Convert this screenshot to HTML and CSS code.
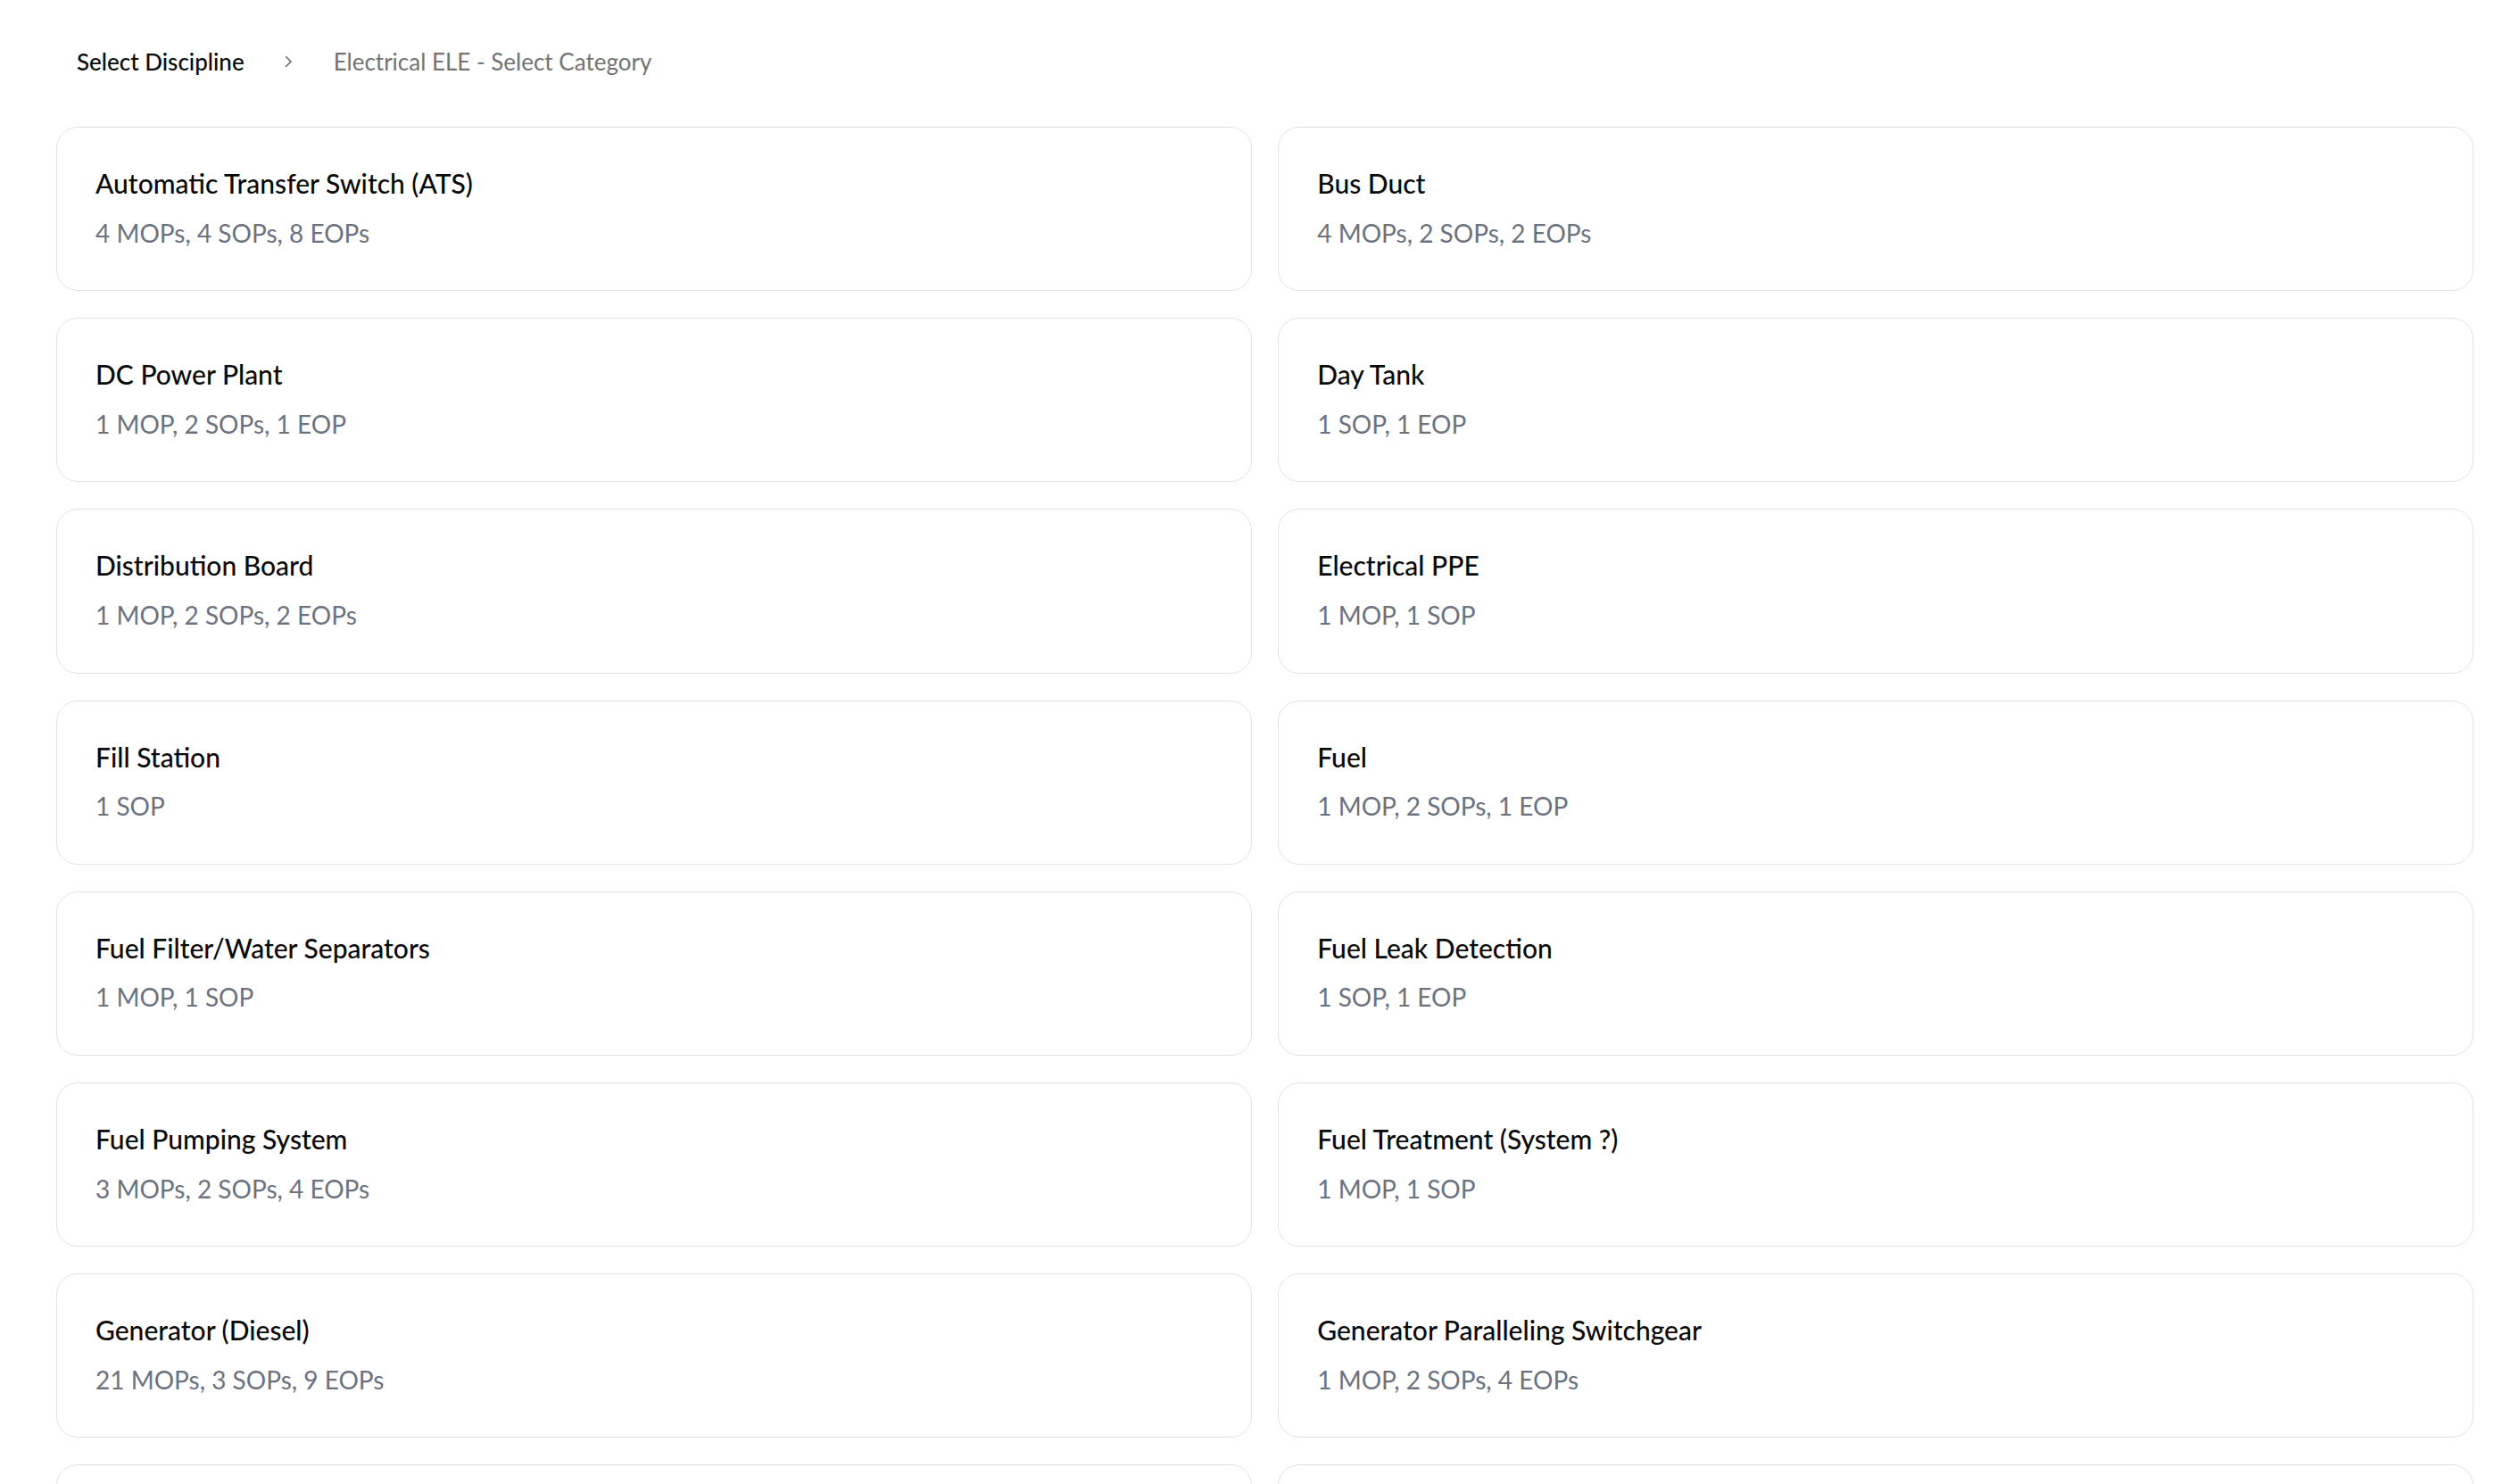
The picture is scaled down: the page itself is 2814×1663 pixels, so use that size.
FILE: index.html
```html
<!DOCTYPE html>
<html lang="en">
<head>
<meta charset="utf-8">
<title>Electrical ELE - Select Category</title>
<link rel="stylesheet" href="styles.css">
</head>
<body>
<div class="page">
  <nav class="crumbs">
    <span class="crumb crumb-link">Select Discipline</span>
    <svg class="chev" width="10" height="14" viewBox="0 0 10 14" aria-hidden="true"><path d="M2.5 1.5 L8 7 L2.5 12.5" fill="none" stroke="#6b6b6b" stroke-width="1.6" stroke-linecap="round" stroke-linejoin="round"/></svg>
    <span class="crumb crumb-current">Electrical ELE - Select Category</span>
  </nav>
  <div class="grid">
    <div class="card"><div class="title">Automatic Transfer Switch (ATS)</div><div class="sub">4 MOPs, 4 SOPs, 8 EOPs</div></div>
    <div class="card"><div class="title">Bus Duct</div><div class="sub">4 MOPs, 2 SOPs, 2 EOPs</div></div>
    <div class="card"><div class="title">DC Power Plant</div><div class="sub">1 MOP, 2 SOPs, 1 EOP</div></div>
    <div class="card"><div class="title">Day Tank</div><div class="sub">1 SOP, 1 EOP</div></div>
    <div class="card"><div class="title">Distribution Board</div><div class="sub">1 MOP, 2 SOPs, 2 EOPs</div></div>
    <div class="card"><div class="title">Electrical PPE</div><div class="sub">1 MOP, 1 SOP</div></div>
    <div class="card"><div class="title">Fill Station</div><div class="sub">1 SOP</div></div>
    <div class="card"><div class="title">Fuel</div><div class="sub">1 MOP, 2 SOPs, 1 EOP</div></div>
    <div class="card"><div class="title">Fuel Filter/Water Separators</div><div class="sub">1 MOP, 1 SOP</div></div>
    <div class="card"><div class="title">Fuel Leak Detection</div><div class="sub">1 SOP, 1 EOP</div></div>
    <div class="card"><div class="title">Fuel Pumping System</div><div class="sub">3 MOPs, 2 SOPs, 4 EOPs</div></div>
    <div class="card"><div class="title">Fuel Treatment (System ?)</div><div class="sub">1 MOP, 1 SOP</div></div>
    <div class="card"><div class="title">Generator (Diesel)</div><div class="sub">21 MOPs, 3 SOPs, 9 EOPs</div></div>
    <div class="card"><div class="title">Generator Paralleling Switchgear</div><div class="sub">1 MOP, 2 SOPs, 4 EOPs</div></div>
    <div class="card"><div class="title">Grounding</div><div class="sub">1 MOP, 1 SOP</div></div>
    <div class="card"><div class="title">Lighting</div><div class="sub">1 SOP</div></div>
  </div>
</div>
</body>
</html>
```

FILE: styles.css
```css
html, body {
  margin: 0;
  padding: 0;
  background: #ffffff;
}

body {
  font-family: Lato, "Open Sans", "Noto Sans", sans-serif;
  color: #0a0a0a;
}

.page {
  padding: 55px 42px 40px 63px;
}

.crumbs {
  display: flex;
  align-items: center;
  height: 28px;
  padding-left: 23px;
  font-size: 26px;
  line-height: 28px;
}

.crumb-link {
  color: #0a0a0a;
  font-weight: 500;
}

.chev {
  margin: 0 46px 0 44px;
  display: block;
}

.crumb-current {
  color: #737373;
}

.grid {
  margin-top: 59px;
  display: grid;
  grid-template-columns: 1fr 1fr;
  column-gap: 29.5px;
  row-gap: 30px;
}

.card {
  border: 1px solid #e3e3e3;
  border-radius: 24px;
  padding: 44px 43px 46.5px 43px;
  background: #ffffff;
}

.title {
  font-size: 30px;
  line-height: 36px;
  font-weight: 500;
  color: #0a0a0a;
}

.sub {
  margin-top: 19.7px;
  font-size: 28px;
  line-height: 36px;
  color: #6b7280;
}
```
